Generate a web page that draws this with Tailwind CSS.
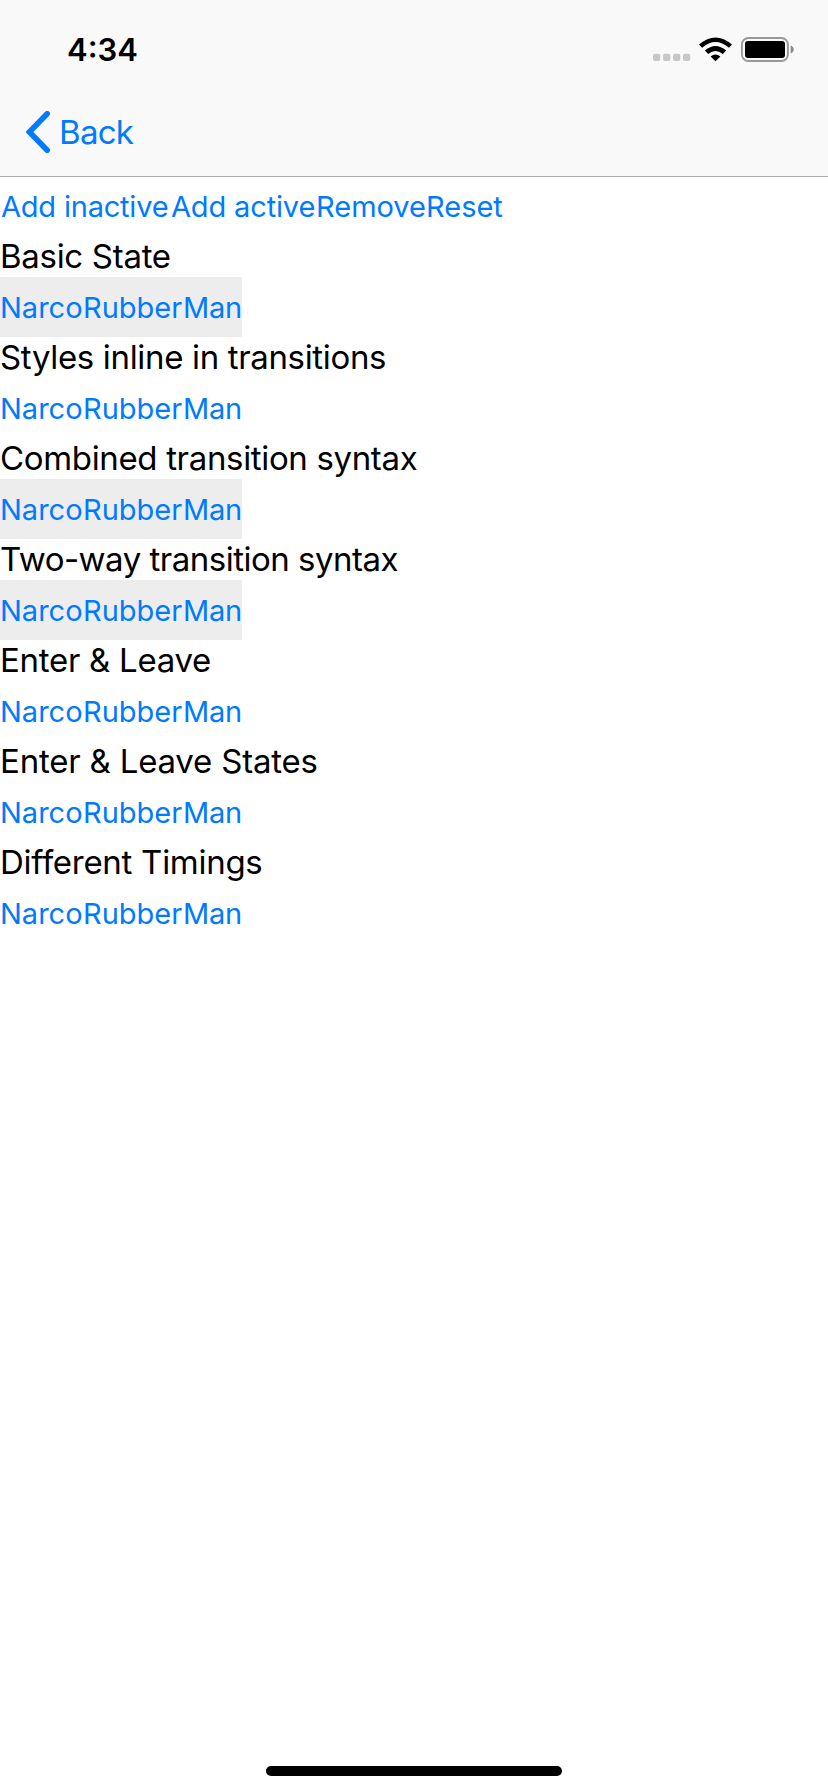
<!DOCTYPE html>
<html lang="en">
<head>
<meta charset="utf-8">
<title>Animations</title>
<script src="https://cdn.jsdelivr.net/npm/@tailwindcss/browser@4"></script>
</head>
<body class="flex flex-col h-[1792px] bg-white text-black font-['Inter',sans-serif] overflow-hidden">
<header class="flex flex-col h-[177px] shrink-0 bg-[#f9f9f9] border-b border-[#acacac]">
  <div class="flex items-center justify-between h-[88px] pt-3 pl-[67px]">
    <span class="text-[31px] leading-10 font-semibold">4:34</span>
    <svg class="w-[198px] h-[60px] shrink-0" viewBox="0 0 198 60">
      <g fill="#c7c7c7">
        <rect x="23" y="33.8" width="7.3" height="7.3" rx="2"/><rect x="33" y="33.8" width="7.3" height="7.3" rx="2"/><rect x="43" y="33.8" width="7.3" height="7.3" rx="2"/><rect x="53" y="33.8" width="7.3" height="7.3" rx="2"/>
      </g>
      <path d="M69 24.6 Q85.5 10.2 102 24.6 L98.9 27.8 Q85.5 16.4 72.1 27.8Z"/>
      <path d="M74.9 30.6 Q85.5 21.4 96.1 30.6 L92.8 33.9 Q85.5 28 78.2 33.9Z"/>
      <path d="M80.6 36.4 Q85.5 32.8 90.4 36.4 L85.5 41.2Z"/>
      <rect x="111.9" y="18" width="46" height="23" rx="6.5" fill="none" stroke="#989898" stroke-width="1.9"/>
      <rect x="115" y="21" width="40" height="17" rx="3"/>
      <path d="M160.7 25.5 C164.8 27 164.8 32 160.7 33.5Z" fill="#898989"/>
    </svg>
  </div>
  <div class="flex items-center h-[88px] pl-[26px] text-[#007aff]">
    <svg class="w-6 h-[42px]" viewBox="0 0 24 42" fill="none" stroke="#007aff" stroke-width="5.6" stroke-linecap="round" stroke-linejoin="miter"><path d="M21.2 2.8 L3.4 21 L21.2 39.2"/></svg>
    <span class="pl-[9px] text-[33px] leading-10 tracking-[-0.7px]">Back</span>
  </div>
</header>
<main class="flex flex-col grow items-start whitespace-nowrap text-[33px] leading-[41px]">
  <div class="flex h-[59px] pb-px items-center text-[29px] text-[#007aff]">
    <span class="w-[170px] pl-px tracking-[-0.2px]">Add inactive</span><span class="w-[146px] pl-px tracking-[-0.15px]">Add active</span><span class="w-[110px]">Remove</span><span>Reset</span>
  </div>
  <h2 class="tracking-[-0.3px]">Basic State</h2>
  <div class="flex h-[60px] w-[242px] items-center bg-[#ededed] text-[29px] text-[#007aff]"><span class="w-[83px]">Narco</span><span class="w-[100px]">Rubber</span><span class="tracking-[-0.2px]">Man</span></div>
  <h2 class="tracking-[-0.34px]">Styles inline in transitions</h2>
  <div class="flex h-[60px] w-[242px] items-center text-[29px] text-[#007aff]"><span class="w-[83px]">Narco</span><span class="w-[100px]">Rubber</span><span class="tracking-[-0.2px]">Man</span></div>
  <h2 class="tracking-[-0.34px]">Combined transition syntax</h2>
  <div class="flex h-[60px] w-[242px] items-center bg-[#ededed] text-[29px] text-[#007aff]"><span class="w-[83px]">Narco</span><span class="w-[100px]">Rubber</span><span class="tracking-[-0.2px]">Man</span></div>
  <h2 class="tracking-[-0.5px]">Two-way transition syntax</h2>
  <div class="flex h-[60px] w-[242px] items-center bg-[#ededed] text-[29px] text-[#007aff]"><span class="w-[83px]">Narco</span><span class="w-[100px]">Rubber</span><span class="tracking-[-0.2px]">Man</span></div>
  <h2 class="tracking-[-0.28px]">Enter &amp; Leave</h2>
  <div class="flex h-[60px] w-[242px] items-center text-[29px] text-[#007aff]"><span class="w-[83px]">Narco</span><span class="w-[100px]">Rubber</span><span class="tracking-[-0.2px]">Man</span></div>
  <h2 class="tracking-[-0.2px]">Enter &amp; Leave States</h2>
  <div class="flex h-[60px] w-[242px] items-center text-[29px] text-[#007aff]"><span class="w-[83px]">Narco</span><span class="w-[100px]">Rubber</span><span class="tracking-[-0.2px]">Man</span></div>
  <h2 class="tracking-[-0.28px]">Different Timings</h2>
  <div class="flex h-[60px] w-[242px] items-center text-[29px] text-[#007aff]"><span class="w-[83px]">Narco</span><span class="w-[100px]">Rubber</span><span class="tracking-[-0.2px]">Man</span></div>
</main>
<footer class="flex justify-center pb-4"><div class="w-[296px] h-[10px] rounded-full bg-black"></div></footer>
</body>
</html>
